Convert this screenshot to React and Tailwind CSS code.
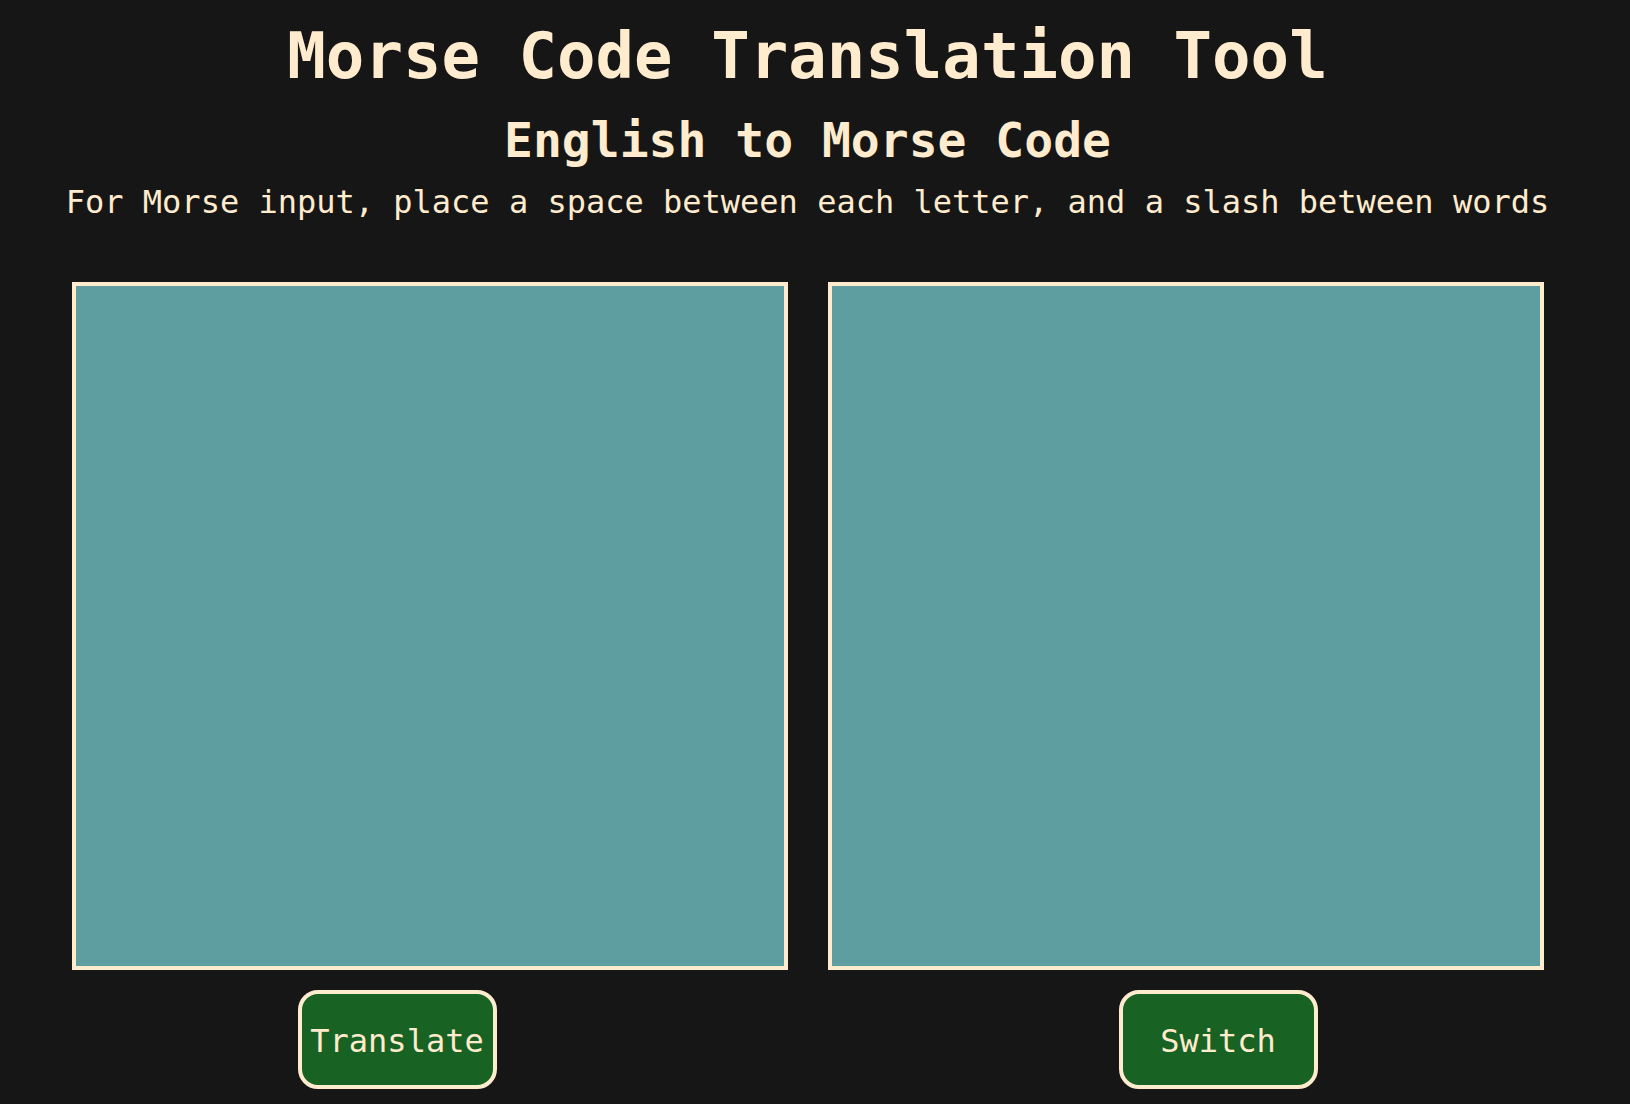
import React from 'react';

const mono = { fontFamily: '"DejaVu Sans Mono", "Liberation Mono", monospace' };

export default function App() {
  return (
    <div className="min-h-screen w-full bg-[#161616] text-[#ffebcd]" style={mono}>
      <div className="w-[1615px] flex flex-col items-center">
        <h1 className="pt-[18px] text-[64px] leading-[1.2] font-bold">Morse Code Translation Tool</h1>
        <h2 className="mt-[17px] text-[48px] leading-[1.2] font-bold">English to Morse Code</h2>
        <p className="mt-[14px] text-[32px] leading-[1.2]">
          For Morse input, place a space between each letter, and a slash between words
        </p>

        <div className="mt-[60px] flex gap-[40px]">
          <textarea className="w-[716px] h-[688px] resize-none border-4 border-[#ffebcd] bg-[#5f9ea0] outline-none" />
          <textarea
            readOnly
            className="w-[716px] h-[688px] resize-none border-4 border-[#ffebcd] bg-[#5f9ea0] outline-none"
          />
        </div>

        <div className="w-[1472px] mt-[20px] px-[226px] flex justify-between">
          <button className="w-[199px] h-[99px] pt-[4px] rounded-[20px] border-4 border-[#ffebcd] bg-[#186224] text-[32px] text-[#ffebcd]">
            Translate
          </button>
          <button className="w-[199px] h-[99px] pt-[4px] rounded-[20px] border-4 border-[#ffebcd] bg-[#186224] text-[32px] text-[#ffebcd]">
            Switch
          </button>
        </div>
      </div>
    </div>
  );
}
